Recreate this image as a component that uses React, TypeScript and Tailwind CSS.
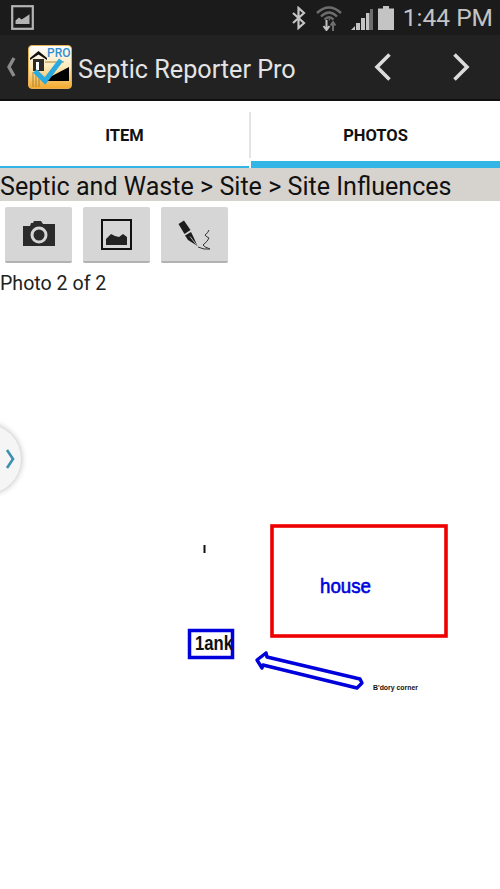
export default function App() {
  const roboto = "font-['Roboto',sans-serif]";
  return (
    <div className={`relative w-[500px] h-[889px] bg-white overflow-hidden flex flex-col ${roboto}`}>
      {/* status bar */}
      <div className="h-[35px] shrink-0 bg-[#1b1b1b] flex items-center pl-[11px] pr-[7px]">
        <svg width="23" height="25" viewBox="0 0 23 25">
          <rect x="1.2" y="1.2" width="20.6" height="22.6" fill="none" stroke="#b4b4b4" strokeWidth="2.2" />
          <path d="M4.5 19 L4.5 15.5 L8 12.5 L10.5 14.5 L13 13 L17.5 10 L18.5 9 L18.5 19 Z" fill="#b4b4b4" />
        </svg>
        <div className="flex-1" />
        <svg width="16" height="24" viewBox="0 0 16 24" className="mr-[9px]">
          <path d="M2 7 L13 17 L7.5 22 L7.5 2 L13 7 L2 17" fill="none" stroke="#c4c4c4" strokeWidth="2.2" />
        </svg>
        <svg width="26" height="26" viewBox="0 0 26 26" className="mr-[9px]">
          <path d="M1 8 Q13 -3 25 8" fill="none" stroke="#6d6d6d" strokeWidth="2.4" />
          <path d="M5 11.5 Q13 3.5 21 11.5" fill="none" stroke="#6d6d6d" strokeWidth="2.4" />
          <path d="M8.5 14.5 Q13 10 17.5 14.5" fill="none" stroke="#6d6d6d" strokeWidth="2.4" />
          <path d="M12 14 L14 14 L14 16 Z" fill="#6d6d6d" />
          <path d="M10.5 15 L10.5 24 M7.5 21 L10.5 25 L13.5 21" fill="none" stroke="#c4c4c4" strokeWidth="2" />
          <path d="M17 26 L17 18 M14.5 20.5 L17 17 L19.5 20.5" fill="none" stroke="#6d6d6d" strokeWidth="2" />
        </svg>
        <svg width="22" height="22" viewBox="0 0 22 22" className="mr-[5px] mt-[3px]">
          <path d="M0 22 L4 18 L4 22 Z" fill="#c4c4c4" />
          <rect x="5" y="15" width="4" height="7" fill="#c4c4c4" />
          <rect x="10" y="10" width="4" height="12" fill="#c4c4c4" />
          <rect x="15" y="5" width="3.5" height="17" fill="#c4c4c4" />
          <rect x="19" y="1" width="3" height="21" fill="#6d6d6d" />
        </svg>
        <svg width="16" height="24" viewBox="0 0 16 24" className="mr-[9px]">
          <rect x="5" y="0" width="6" height="3" fill="#c4c4c4" />
          <rect x="0" y="2.5" width="16" height="21.5" fill="#c4c4c4" />
        </svg>
        <span className="text-[24.5px] leading-none text-[#c4c4c4] pt-[1px]">1:44 PM</span>
      </div>
      {/* action bar */}
      <div className="h-[66px] shrink-0 bg-[#222222] border-b-2 border-[#111111] flex items-center">
        <svg width="12" height="22" viewBox="0 0 12 22" className="ml-[5px] mr-[11px]">
          <path d="M9 2 L4 11 L9 20" fill="none" stroke="#8a8a8a" strokeWidth="3.4" />
        </svg>
        <svg width="44" height="44" viewBox="0 0 44 44" className="shrink-0">
          <defs>
            <linearGradient id="ic" x1="0" y1="0" x2="0" y2="1">
              <stop offset="0" stopColor="#ffffff" />
              <stop offset="0.5" stopColor="#fde9b8" />
              <stop offset="1" stopColor="#f3a92c" />
            </linearGradient>
          </defs>
          <rect x="0.5" y="0.5" width="43" height="43" rx="3.5" fill="url(#ic)" stroke="#e8b050" />
          <path d="M22 32 L41 22 L41 36 L18 36 Z" fill="#000" />
          <path d="M2 13 L10.5 6 L19 13 L19 15 L10.5 9.5 L2 15 Z" fill="#111" />
          <rect x="5" y="14" width="11" height="12" fill="#2a2a2a" />
          <rect x="8" y="17" width="3" height="8" fill="#fff" />
          <path d="M17 17 H36 M5 27 V42 M8 28 V42 M11 30 V42" stroke="#a88434" strokeWidth="1" fill="none" />
          <path d="M7 26 L17 36 L33 15" fill="none" stroke="#29abe2" strokeWidth="5" />
          <text x="19" y="11.5" fontSize="12" fontWeight="500" fill="#2f8fd0" fontFamily="Roboto, sans-serif">PRO</text>
        </svg>
        <span className="ml-[6px] pt-[6px] text-[25.2px] leading-none text-[#e4e4e4] whitespace-nowrap">Septic Reporter Pro</span>
        <div className="flex-1" />
        <svg width="18" height="30" viewBox="0 0 18 30" className="mr-[60px]">
          <path d="M15.5 2.5 L3 15 L15.5 27.5" fill="none" stroke="#dcdcdc" strokeWidth="3.6" />
        </svg>
        <svg width="18" height="30" viewBox="0 0 18 30" className="mr-[30px]">
          <path d="M2.5 2.5 L15 15 L2.5 27.5" fill="none" stroke="#dcdcdc" strokeWidth="3.6" />
        </svg>
      </div>
      {/* tabs */}
      <div className="h-[67px] shrink-0 flex bg-white">
        <div className="w-[249px] border-b-2 border-[#33b5e5] flex items-center justify-center pt-[6px]">
          <span className="text-[16.5px] font-bold text-[#111] leading-none">ITEM</span>
        </div>
        <div className="w-[2px] h-[46px] mt-[11px] bg-[#e4e4e4]" />
        <div className="flex-1 border-b-[7px] border-[#33b5e5] flex items-center justify-center pt-[11px]">
          <span className="text-[16.5px] font-bold text-[#111] leading-none">PHOTOS</span>
        </div>
      </div>
      {/* breadcrumb */}
      <div className="h-[33px] shrink-0 bg-[#d6d3ce] flex items-center pt-[5px] text-[25.1px] leading-none text-[#111] whitespace-nowrap">
        Septic and Waste &gt; Site &gt; Site Influences
      </div>
      {/* buttons */}
      <div className="flex gap-[11px] pl-[5px] mt-[6px]">
        <div className="w-[67px] h-[56px] bg-[#d6d6d6] border-b-2 border-[#b2b2b2] rounded-[2px] flex items-center justify-center">
          <svg width="32" height="26" viewBox="0 0 32 26">
            <path d="M0 5 H7 L8 2 L10 2 L11 0 H18 L20 3 H32 V25 H0 Z" fill="#2b2b2b" />
            <circle cx="16" cy="14" r="8.5" fill="#d6d6d6" />
            <circle cx="16" cy="14" r="5.5" fill="#2b2b2b" />
          </svg>
        </div>
        <div className="w-[67px] h-[56px] bg-[#d6d6d6] border-b-2 border-[#b2b2b2] rounded-[2px] flex items-center justify-center">
          <svg width="31" height="31" viewBox="0 0 31 31">
            <rect x="1" y="1" width="29" height="29" fill="none" stroke="#111" strokeWidth="2" />
            <path d="M5 26 V20 L10 15 L14 17 L18 18 L22 15 L26 18 V26 Z" fill="#222" />
          </svg>
        </div>
        <div className="w-[67px] h-[56px] bg-[#d6d6d6] border-b-2 border-[#b2b2b2] rounded-[2px] flex items-center justify-center">
          <svg width="34" height="36" viewBox="0 0 34 36">
            <path d="M0.5 8 L6 4.5 L12.5 14 L6.5 18 Z" fill="#1c1c1c" />
            <path d="M7 19.5 L13 16 L15 20 L19.5 30 L10 24 Z" fill="#1c1c1c" />
            <path d="M12 20.5 L18.5 29" stroke="#d6d6d6" strokeWidth="0.8" />
            <path d="M20 31 Q26 34 32 33 Q26 31 25 29 Q30 25 31 22 Q27 20 27 19 Q30 17 31 14" fill="none" stroke="#333" strokeWidth="1" />
          </svg>
        </div>
      </div>
      <div className="mt-[9px] text-[19.6px] leading-[24px] text-[#222] whitespace-nowrap">Photo 2 of 2</div>
      {/* drawing */}
      <svg width="500" height="593" viewBox="0 296 500 593" className="block">
        <path d="M204.5 545 V553" stroke="#111" strokeWidth="2" />
        <rect x="272" y="526" width="174" height="110" fill="none" stroke="#ee0000" strokeWidth="3.6" />
        <text x="320" y="593" fontSize="20" fill="#0000dd" stroke="#0000dd" strokeWidth="0.6" textLength="51" lengthAdjust="spacingAndGlyphs" fontFamily="'Liberation Sans', sans-serif">house</text>
        <rect x="189.5" y="630.5" width="43" height="27" fill="none" stroke="#0000dd" strokeWidth="3.5" />
        <text x="195" y="650" fontSize="20" fontWeight="700" fill="#111" textLength="38" lengthAdjust="spacingAndGlyphs" fontFamily="'Liberation Sans', sans-serif">1ank</text>
        <path d="M266 653 L257 660 L262 668 L263 665 L357 688 L362 683 L360 679 L267 657 Z" fill="none" stroke="#0000dd" strokeWidth="3.4" strokeLinejoin="round" />
        <text x="373" y="690" fontSize="6.5" fontWeight="700" fill="#111" textLength="45" lengthAdjust="spacingAndGlyphs" fontFamily="'Liberation Sans', sans-serif">B'dory corner</text>
      </svg>
      {/* side handle */}
      <div className="absolute left-[-49px] top-[424px] w-[70px] h-[70px] rounded-full bg-[#f5f5f5] shadow-[0_0_6px_rgba(0,0,0,0.3)]" />
      <svg width="10" height="22" viewBox="0 0 10 22" className="absolute left-[5px] top-[448px]">
        <path d="M2 2 L8 11 L2 20" fill="none" stroke="#3d8fb0" strokeWidth="2.6" />
      </svg>
    </div>
  );
}
